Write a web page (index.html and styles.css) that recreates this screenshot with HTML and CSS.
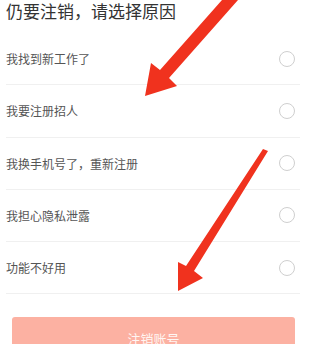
FILE: index.html
```html
<!DOCTYPE html>
<html lang="zh-CN">
<head>
<meta charset="utf-8">
<link rel="stylesheet" href="styles.css">
</head>
<body>
<div class="page">
  <h1 class="title">仍要注销，请选择原因</h1>
  <ul class="reasons">
    <li class="reason"><span class="label">我找到新工作了</span><span class="radio"></span></li>
    <li class="reason"><span class="label">我要注册招人</span><span class="radio"></span></li>
    <li class="reason"><span class="label">我换手机号了，重新注册</span><span class="radio"></span></li>
    <li class="reason"><span class="label">我担心隐私泄露</span><span class="radio"></span></li>
    <li class="reason"><span class="label">功能不好用</span><span class="radio"></span></li>
  </ul>
  <div class="actions">
    <button class="submit" type="button">注销账号</button>
  </div>
  <svg class="annotations" width="300" height="344" viewBox="0 0 300 344" aria-hidden="true">
    <polygon fill="#f0321e" points="222,0 238,0 169,78 177,86 145,96 151,63 160,70"/>
    <polygon fill="#f0321e" points="263,149 268,151 194,271 203,278 178,291 178,262 186,266"/>
  </svg>
</div>
</body>
</html>
```
FILE: styles.css
```css
* { box-sizing: border-box; }
html, body {
  margin: 0;
  padding: 0;
  background: #ffffff;
}
body {
  font-family: "Noto Sans CJK SC", "Noto Sans", sans-serif;
  width: 300px;
  height: 344px;
  overflow: hidden;
}
.page {
  position: relative;
  width: 300px;
  height: 344px;
  overflow: hidden;
}
.title {
  margin: 0;
  padding: 0 0 11px 6px;
  font-size: 17px;
  line-height: 22px;
  font-weight: 400;
  color: #333333;
}
.reasons {
  list-style: none;
  margin: 0 0 0 6px;
  padding: 0;
}
.reason {
  display: flex;
  align-items: center;
  justify-content: space-between;
  height: 52.25px;
  border-bottom: 1px solid #f0f0f0;
  padding-right: 5px;
}
.label {
  font-size: 12px;
  color: #555555;
}
.radio {
  width: 16px;
  height: 16px;
  border: 1.5px solid #cfcfcf;
  border-radius: 50%;
}
.actions {
  padding: 23px 5px 0 12px;
}
.submit {
  display: block;
  width: 100%;
  height: 42px;
  border: none;
  border-radius: 3px;
  background: #fcb1a2;
  color: #fff6f3;
  font-family: "Noto Sans CJK SC", "Noto Sans", sans-serif;
  font-size: 13px;
  padding: 0;
}
.annotations {
  position: absolute;
  left: 0;
  top: 0;
  pointer-events: none;
}
```
